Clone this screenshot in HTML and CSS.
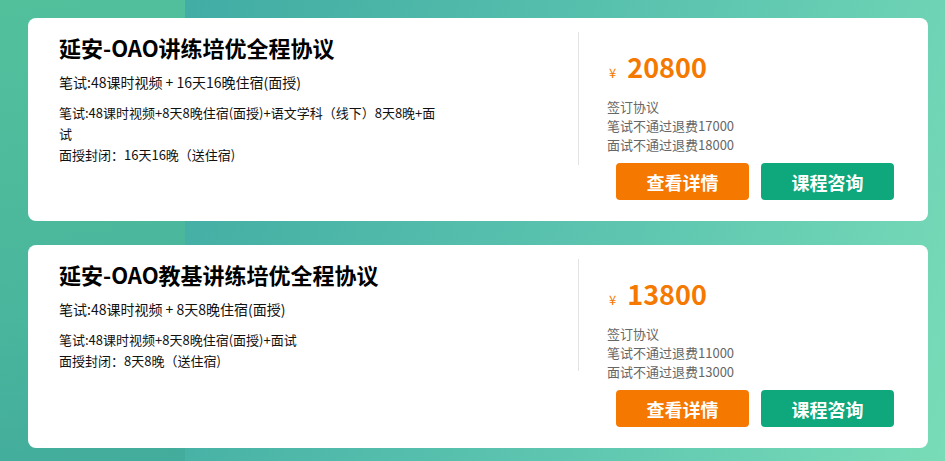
FILE: index.html
```html
<!DOCTYPE html>
<html lang="zh-CN">
<head>
<meta charset="utf-8">
<title>课程协议</title>
<link rel="stylesheet" href="styles.css">
</head>
<body>
<main class="list">
  <section class="card">
    <div class="info">
      <h2 class="title">延安-OAO讲练培优全程协议</h2>
      <p class="summary">笔试:48课时视频 + 16天16晚住宿(面授)</p>
      <p class="desc">笔试:48课时视频+8天8晚住宿(面授)+语文学科（线下）8天8晚+面试<br>面授封闭：16天16晚（送住宿)</p>
    </div>
    <div class="side">
      <div class="price"><span class="yen">¥</span><span class="num">20800</span></div>
      <ul class="terms">
        <li>签订协议</li>
        <li>笔试不通过退费17000</li>
        <li>面试不通过退费18000</li>
      </ul>
      <div class="actions">
        <a class="btn btn-orange">查看详情</a>
        <a class="btn btn-green">课程咨询</a>
      </div>
    </div>
  </section>
  <section class="card">
    <div class="info">
      <h2 class="title">延安-OAO教基讲练培优全程协议</h2>
      <p class="summary">笔试:48课时视频 + 8天8晚住宿(面授)</p>
      <p class="desc">笔试:48课时视频+8天8晚住宿(面授)+面试<br>面授封闭：8天8晚（送住宿)</p>
    </div>
    <div class="side">
      <div class="price"><span class="yen">¥</span><span class="num">13800</span></div>
      <ul class="terms">
        <li>签订协议</li>
        <li>笔试不通过退费11000</li>
        <li>面试不通过退费13000</li>
      </ul>
      <div class="actions">
        <a class="btn btn-orange">查看详情</a>
        <a class="btn btn-green">课程咨询</a>
      </div>
    </div>
  </section>
</main>
</body>
</html>
```

FILE: styles.css
```css
* { box-sizing: border-box; }
html, body { height: 100%; }
body {
  margin: 0;
  font-family: "Noto Sans CJK SC", "Noto Sans", sans-serif;
  color: #111;
  background:
    linear-gradient(170deg, #53c09c 0%, #4ab79d 60%, #43ac9c 100%) 0 0 / 185px 100% no-repeat,
    linear-gradient(108deg, #39a6a3 0%, #48b2a6 30%, #5ec6b0 65%, #79dcb8 100%);
  overflow: hidden;
}
.list {
  display: flex;
  flex-direction: column;
  gap: 24px;
  padding-top: 18px;
  padding-left: 28px;
}
.card {
  width: 900px;
  height: 203px;
  background: #fff;
  border-radius: 8px;
  display: flex;
  align-items: flex-start;
  padding: 14px 0 20px 0;
}
.info {
  flex: 0 0 551px;
  padding-left: 31px;
  border-right: 1px solid #e3e3e3;
}
.title {
  margin: 0;
  font-size: 22px;
  line-height: 30px;
  font-weight: 700;
  color: #000;
}
.summary {
  margin: 10px 0 0;
  font-size: 14px;
  line-height: 20px;
  color: #111;
}
.desc {
  margin: 10px 0 0;
  max-width: 382px;
  font-size: 13px;
  line-height: 21px;
  color: #111;
}
.side {
  flex: 1;
  padding-left: 28px;
  display: flex;
  flex-direction: column;
}
.price {
  margin-top: 17px;
  height: 36px;
  display: flex;
  align-items: baseline;
  color: #f57800;
}
.yen {
  font-size: 13px;
  margin-left: 2px;
  margin-right: 11px;
}
.num {
  font-size: 27px;
  font-weight: 700;
  line-height: 36px;
}
.terms {
  list-style: none;
  margin: 12px 0 0;
  padding: 0;
  font-size: 13px;
  line-height: 19px;
  color: #666;
}
.actions {
  display: flex;
  gap: 12px;
  margin-top: 9px;
  margin-left: 9px;
}
.btn {
  width: 133px;
  height: 37px;
  border-radius: 4px;
  display: flex;
  align-items: center;
  justify-content: center;
  color: #fff;
  font-size: 18px;
  font-weight: 700;
  text-decoration: none;
}
.btn-orange { background: #f57800; }
.btn-green { background: #0ea87c; }
```
